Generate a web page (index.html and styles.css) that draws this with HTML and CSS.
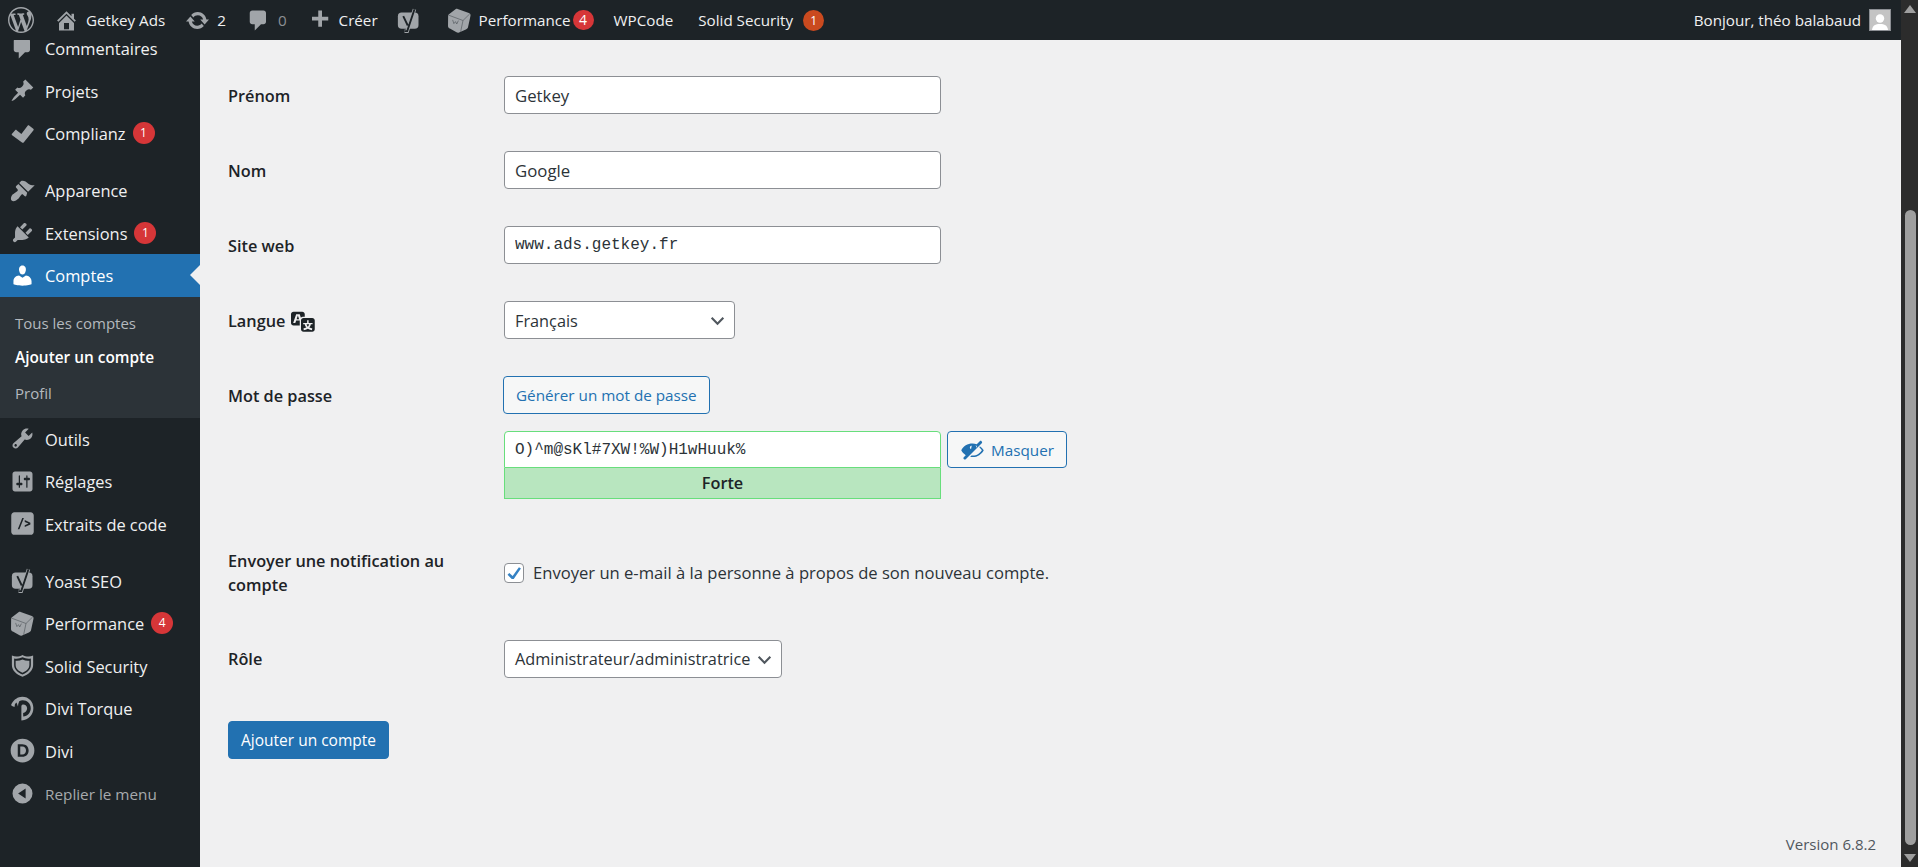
FILE: index.html
```html
<!DOCTYPE html>
<html lang="fr">
<head>
<meta charset="utf-8">
<title>Ajouter un compte</title>
<link rel="stylesheet" href="styles.css">
</head>
<body>
<svg class="defs" width="0" height="0" aria-hidden="true">
  <symbol id="i-wp" viewBox="0 0 20 20"><path d="M20 10c0-5.51-4.49-10-10-10C4.48 0 0 4.49 0 10c0 5.52 4.48 10 10 10 5.51 0 10-4.48 10-10zM7.78 15.37L4.37 6.22c.55-.02 1.17-.08 1.17-.08.5-.06.44-1.13-.06-1.11 0 0-1.45.11-2.37.11-.18 0-.37 0-.58-.01C4.12 2.69 6.87 1.11 10 1.11c2.33 0 4.45.87 6.05 2.34-.68-.11-1.65.39-1.65 1.58 0 .74.45 1.36.9 2.1.35.61.55 1.36.55 2.46 0 1.49-1.4 5-1.4 5l-3.03-8.37c.54-.02.82-.17.82-.17.5-.05.44-1.25-.06-1.22 0 0-1.44.12-2.38.12-.87 0-2.33-.12-2.33-.12-.5-.03-.56 1.2-.06 1.22l.92.08 1.26 3.41zM17.41 10c.24-.64.74-1.87.43-4.25.7 1.29 1.05 2.71 1.05 4.25 0 3.29-1.73 6.24-4.4 7.78.97-2.59 1.94-5.2 2.92-7.78zM6.1 18.09C3.12 16.65 1.11 13.53 1.11 10c0-1.3.23-2.48.72-3.59C3.25 10.3 4.67 14.2 6.1 18.09zm4.03-6.63l2.58 6.98c-.86.29-1.76.45-2.71.45-.79 0-1.57-.11-2.29-.33.81-2.38 1.62-4.74 2.42-7.1z"/></symbol>
  <symbol id="i-home" viewBox="0 0 20 20"><path d="M16 8.5l1.53 1.53-1.06 1.06L10 4.62l-6.47 6.47-1.06-1.06L10 2.5l4 4v-2h2v4zm-6-2.46l6 5.99V18H4v-5.97zM12 17v-5H8v5h4z"/></symbol>
  <symbol id="i-update" viewBox="0 0 20 20"><path d="M10.2 3.28c3.53 0 6.43 2.61 6.92 6h2.08l-3.5 4-3.5-4h2.32c-.45-1.97-2.21-3.45-4.32-3.45-1.45 0-2.73.71-3.54 1.78L4.95 5.66C6.23 4.2 8.11 3.28 10.2 3.28zm-.4 13.44c-3.52 0-6.43-2.61-6.92-6H.8l3.5-4c1.17 1.33 2.33 2.67 3.5 4H5.48c.45 1.97 2.21 3.45 4.32 3.45 1.45 0 2.73-.71 3.54-1.78l1.71 1.95c-1.28 1.46-3.15 2.38-5.25 2.38z"/></symbol>
  <symbol id="i-comment" viewBox="0 0 20 20"><path d="M5 2h9c1.1 0 2 .9 2 2v7c0 1.1-.9 2-2 2h-2l-5 5v-5H5c-1.1 0-2-.9-2-2V4c0-1.1.9-2 2-2z"/></symbol>
  <symbol id="i-plus" viewBox="0 0 20 20"><path d="M17 7v3h-5v5H9v-5H4V7h5V2h3v5h5z"/></symbol>
  <symbol id="i-yoast" viewBox="0 0 20 20"><rect x="1.500" y="3.500" width="16.500" height="13" rx="3"/><path class="y-edge" d="M14.800 1L9 18.500H6.800"/><path class="y-ink" d="M5.800 6.500l3.600 7.500M14.800 1L9 18.500H6.800"/></symbol>
  <symbol id="i-cube" viewBox="0 0 20 20"><path d="M8.500.7l9 3.300c1 .4 1.500 1.100 1.300 2.100l-2 9.300c-.2 1-.8 1.300-1.700 1.700l-5.500 2.500c-.8.300-1.300.200-2-.2l-5.300-3C1.300 16 .8 15.300.8 14.300L.9 6.600c0-.9.400-1.500 1.200-2l4.700-3.600c.5-.4 1.100-.500 1.700-.300z"/><path class="cut-thin" d="M1.500 5.800l11.300 4.200 5.300-5.200M12.800 10l-1.900 9M4.500 9.500l1 3 1.300-1.600 1 1.900 1.300-2.700"/></symbol>
  <symbol id="i-pin" viewBox="0 0 20 20"><path d="M10.440 3.020l1.820-1.820 6.360 6.350-1.830 1.820c-1.050-.680-2.480-.570-3.410.360l-.750.750c-.920.930-1.040 2.350-.350 3.410l-1.830 1.820-2.410-2.410-2.800 2.790c-.420.420-3.380 2.710-3.800 2.290s1.860-3.390 2.280-3.810l2.790-2.790L4.100 9.360l1.830-1.820c1.050.69 2.480.57 3.400-.36l.750-.750c.930-.920 1.050-2.350.360-3.410z"/></symbol>
  <symbol id="i-check" viewBox="0 0 20 20"><path d="M15.300 3.600l3.300 2.500c.4.300.5.8.2 1.200l-7.700 9.600c-.4.500-1 .6-1.500.2L1.700 11.300c-.4-.3-.4-.9-.1-1.200l2.500-2.700c.3-.4.900-.4 1.200-.1l3.800 3.100 5-6.600c.3-.4.800-.5 1.200-.2z"/></symbol>
  <symbol id="i-brush" viewBox="0 0 20 20"><path d="M14.480 11.060L7.410 3.990l1.500-1.500c.5-.56 2.300-.47 3.510.32 1.210.8 1.430 1.280 2.910 2.100 1.180.64 2.450 1.260 4.450.85zm-.71.71L6.700 4.700 4.930 6.470c-.39.39-.39 1.020 0 1.410l1.060 1.060c.39.39.39 1.030 0 1.420-.6.6-1.430 1.110-2.210 1.690-.35.26-.7.53-1.010.84C1.430 13.230 0 16.600 1.300 18c1.400 1.300 4-.100 5.300-1.400.31-.31.58-.66.85-1.010.57-.78 1.080-1.610 1.690-2.210.39-.39 1.020-.39 1.410 0l1.060 1.060c.39.39 1.020.39 1.410 0z"/></symbol>
  <symbol id="i-plug" viewBox="0 0 20 20"><path d="M13.110 4.360L9.870 7.600 8 5.730l3.240-3.240c.35-.34 1.050-.2 1.560.32.52.51.66 1.210.31 1.550zm-8 1.770l.91-1.120 9.010 9.010-1.190.84c-.71.71-2.630 1.160-3.820 1.160H6.140L4.900 17.260c-.59.59-1.540.59-2.120 0-.59-.58-.59-1.530 0-2.120l1.240-1.240v-3.880c0-1.130.4-3.190 1.090-3.890zm7.260 3.970l3.240-3.240c.34-.35 1.040-.21 1.550.31.52.51.66 1.210.31 1.550l-3.240 3.250z"/></symbol>
  <symbol id="i-user" viewBox="0 0 20 20"><path d="M10 9.250c-2.270 0-2.730-3.440-2.730-3.440C7 4.020 7.820 2 9.970 2c2.160 0 2.980 2.020 2.710 3.810 0 0-.41 3.440-2.680 3.440zm0 2.570L12.720 10c2.390 0 4.520 2.330 4.520 4.530v2.490s-3.650 1.130-7.240 1.130c-3.650 0-7.240-1.130-7.240-1.130v-2.490c0-2.250 1.940-4.480 4.470-4.480z"/></symbol>
  <symbol id="i-tool" viewBox="0 0 20 20"><path d="M16.680 9.770c-1.340 1.340-3.300 1.670-4.950.99l-5.410 6.520c-.99.99-2.590.99-3.580 0s-.99-2.590 0-3.570l6.520-5.420c-.68-1.650-.35-3.610.99-4.950 1.280-1.280 3.120-1.620 4.720-1.060l-2.890 2.890 2.820 2.820 2.860-2.870c.53 1.580.18 3.390-1.080 4.650zM3.810 16.210c.4.39 1.040.39 1.430 0 .4-.4.4-1.040 0-1.430-.39-.4-1.030-.4-1.430 0-.39.39-.39 1.030 0 1.430z"/></symbol>
  <symbol id="i-settings" viewBox="0 0 20 20"><path d="M18 16V4c0-1.100-.9-2-2-2H4c-1.100 0-2 .9-2 2v12c0 1.100.9 2 2 2h12c1.100 0 2-.9 2-2zM8 11h1c.55 0 1 .45 1 1s-.45 1-1 1H8v1.500c0 .28-.22.5-.5.5s-.5-.22-.5-.5V13H6c-.55 0-1-.45-1-1s.45-1 1-1h1V5.500c0-.28.22-.5.5-.5s.5.22.5.5V11zm5-2h-1c-.55 0-1-.45-1-1s.45-1 1-1h1V5.500c0-.28.22-.5.5-.5s.5.22.5.5V7h1c.55 0 1 .45 1 1s-.45 1-1 1h-1v5.500c0 .28-.22.5-.5.5s-.5-.22-.5-.5V9z"/></symbol>
  <symbol id="i-code" viewBox="0 0 20 20"><path fill-rule="evenodd" d="M3.500 1h13C17.900 1 19 2.100 19 3.500v13c0 1.400-1.100 2.500-2.500 2.500h-13C2.100 19 1 17.900 1 16.500v-13C1 2.100 2.100 1 3.500 1zM9.800 5.500L6.200 14.500h1.300l3.600-9zM11.800 7.200v1.500l3 1.300-3 1.300v1.500l4.500-2.100v-1.400z"/></symbol>
  <symbol id="i-shield" viewBox="0 0 20 20"><path fill-rule="evenodd" d="M10 1.500c2.600 1.400 5.500 1.900 8.500.4v7.600c0 4.300-3.500 7.500-8.500 9.500-5-2-8.500-5.200-8.500-9.500V1.900c3 1.500 5.900 1 8.500-.4zM10 3.400C7.800 4.400 5.500 4.800 3.300 4.300v5.200c0 3.300 2.700 5.900 6.700 7.600 4-1.700 6.700-4.300 6.700-7.600V4.300c-2.200.5-4.500.1-6.700-.9z"/><path d="M10 5.200c-1.800.8-3.700 1.100-5.500.9v3.500c0 2.700 2.200 4.800 5.500 6.200 3.300-1.400 5.500-3.500 5.500-6.200V6.100C13.700 6.300 11.800 6 10 5.200z"/></symbol>
  <symbol id="i-torque" viewBox="0 0 20 20"><path d="M9.800.5c5.300 0 8.900 3.900 8.900 9 0 5.300-3.800 9.500-9.300 10l-.3-.1V8.200c0-1 .8-1.500 1.500-1.500 1.600 0 3.100 1.300 3.100 3.100 0 2.100-1.600 3.500-3.200 3.800v-.1 0l.1 2.900c3.400-.5 6-3.100 6-6.700 0-3.700-2.900-6.300-6.400-6.300-1 0-2 .2-2.800.7l-.8 2.200-.2 2-1.200-3.100-1.200 1.200-.4 2.400L1.600 8C.8 7.400.8 6.600 1.400 5.900 3.300 2.700 6.200.5 9.800.5z"/></symbol>
  <symbol id="i-divi" viewBox="0 0 20 20"><path fill-rule="evenodd" d="M10 .5a9.500 9.500 0 1 1 0 19 9.500 9.500 0 0 1 0-19zM6.200 5v10h3.600c3.300 0 5.100-2.200 5.100-5S13.100 5 9.800 5zM8.200 6.800h1.600c2 0 3 1.400 3 3.200s-1 3.200-3 3.200H8.200z"/></symbol>
  <symbol id="i-collapse" viewBox="0 0 20 20"><path fill-rule="evenodd" d="M10 2a8 8 0 1 1 0 16 8 8 0 0 1 0-16zM12.500 6L6.500 10l6 4z"/></symbol>
  <symbol id="i-translate" viewBox="0 0 20 20"><path d="M11 7H9.490c-.63 0-1.250.3-1.590.7L7 5H4.130l-2.390 7h1.690l.74-2H7v4H2c-1.100 0-2-.9-2-2V5c0-1.100.9-2 2-2h7c1.100 0 2 .9 2 2v2zM6.510 9H4.490l1-2.930zM10 8h7c1.100 0 2 .9 2 2v7c0 1.100-.9 2-2 2h-7c-1.100 0-2-.9-2-2v-7c0-1.100.9-2 2-2zm7.250 5v-1.080h-3.170V9.750h-1.160v2.170H9.750V13h1.280c.11.85.56 1.850 1.280 2.620-.87.36-1.890.62-2.310.62-.01.02.22.97.2 1.460.84 0 2.210-.5 3.280-1.150 1.090.65 2.480 1.150 3.340 1.150-.02-.49.2-1.440.2-1.460-.43 0-1.490-.27-2.380-.63.7-.77 1.140-1.770 1.250-2.610h1.360zm-3.810 1.930c-.5-.46-.85-1.130-1.010-1.930h2.090c-.17.8-.51 1.470-1 1.930l-.04.03s-.03-.02-.04-.03z"/></symbol>
  <symbol id="i-hidden" viewBox="0 0 20 20"><path d="M17.200 3.300l.2.200c.4.400.4 1 0 1.400L4.600 17.700c-.4.400-1 .4-1.400 0l-.2-.2c-.4-.4-.4-1 0-1.400l1.600-1.600C3 13.500 1.800 12.200 1 10.600c.8-1.700 2-3 3.600-4S8 5.100 10 5.100c1.200 0 2.300.2 3.400.6l2.400-2.400c.4-.4 1-.4 1.400 0zM13.600 7.200c-.4-.3-.8-.5-1.200-.7.5.6.7 1.300.7 2 0 .6-.2 1.100-.4 1.600zM9.400 7c-.8 0-1.500.5-1.500 1.400 0 .6.400 1.100.9 1.300zM15.800 7.400c1.300.8 2.300 1.900 3.200 3.200-.8 1.600-2 2.900-3.600 3.900s-3.300 1.500-5.300 1.500c-.7 0-1.400-.1-2-.2l1.100-1.100c.3 0 .6.100.9.100 1.700 0 3.200-.4 4.500-1.200 1.200-.800 2.200-1.800 2.900-3-.6-.8-1.200-1.500-1.900-2z"/></symbol>
</svg>

<div class="viewport">
  <div class="page">
    <header class="adminbar">
      <a class="ab-item ab-logo"><svg class="ic ic-logo"><use href="#i-wp"/></svg></a>
      <a class="ab-item"><svg class="ic"><use href="#i-home"/></svg><span>Getkey Ads</span></a>
      <a class="ab-item"><svg class="ic"><use href="#i-update"/></svg><span>2</span></a>
      <a class="ab-item"><svg class="ic"><use href="#i-comment"/></svg><span class="muted">0</span></a>
      <a class="ab-item"><svg class="ic"><use href="#i-plus"/></svg><span>Créer</span></a>
      <a class="ab-item ab-yoast"><svg class="ic"><use href="#i-yoast"/></svg></a>
      <a class="ab-item ab-perf"><svg class="ic ic-cube"><use href="#i-cube"/></svg><span>Performance</span><b class="badge badge-bar">4</b></a>
      <a class="ab-item"><span>WPCode</span></a>
      <a class="ab-item ab-solid"><span>Solid Security</span><b class="badge badge-orange">1</b></a>
      <a class="ab-item ab-account"><span>Bonjour, théo balabaud</span>
        <span class="avatar"><svg viewBox="0 0 20 20"><circle cx="10" cy="8.500" r="4.200"/><path d="M2 20c.5-4.500 3.500-6 8-6s7.500 1.500 8 6z"/></svg></span>
      </a>
    </header>
    <div class="body-row">
      <nav class="sidemenu">
        <ul class="menu">
          <li class="mi"><svg class="ic"><use href="#i-comment"/></svg><span>Commentaires</span></li>
          <li class="mi"><svg class="ic"><use href="#i-pin"/></svg><span>Projets</span></li>
          <li class="mi"><svg class="ic"><use href="#i-check"/></svg><span>Complianz</span><b class="badge">1</b></li>
          <li class="sep"></li>
          <li class="mi"><svg class="ic"><use href="#i-brush"/></svg><span>Apparence</span></li>
          <li class="mi"><svg class="ic"><use href="#i-plug"/></svg><span>Extensions</span><b class="badge">1</b></li>
          <li class="mi mi-active"><svg class="ic"><use href="#i-user"/></svg><span>Comptes</span></li>
          <li class="submenu">
            <a class="si">Tous les comptes</a>
            <a class="si si-current">Ajouter un compte</a>
            <a class="si">Profil</a>
          </li>
          <li class="mi"><svg class="ic"><use href="#i-tool"/></svg><span>Outils</span></li>
          <li class="mi"><svg class="ic"><use href="#i-settings"/></svg><span>Réglages</span></li>
          <li class="mi"><svg class="ic"><use href="#i-code"/></svg><span>Extraits de code</span></li>
          <li class="sep"></li>
          <li class="mi"><svg class="ic"><use href="#i-yoast"/></svg><span>Yoast SEO</span></li>
          <li class="mi"><svg class="ic ic-cube"><use href="#i-cube"/></svg><span>Performance</span><b class="badge">4</b></li>
          <li class="mi"><svg class="ic"><use href="#i-shield"/></svg><span>Solid Security</span></li>
          <li class="mi"><svg class="ic"><use href="#i-torque"/></svg><span>Divi Torque</span></li>
          <li class="mi"><svg class="ic"><use href="#i-divi"/></svg><span>Divi</span></li>
          <li class="mi mi-collapse"><svg class="ic"><use href="#i-collapse"/></svg><span>Replier le menu</span></li>
        </ul>
      </nav>
      <main class="content">
        <form class="form">
          <div class="row">
            <label class="lbl">Prénom</label>
            <input class="field" type="text" value="Getkey">
          </div>
          <div class="row">
            <label class="lbl">Nom</label>
            <input class="field" type="text" value="Google">
          </div>
          <div class="row">
            <label class="lbl">Site web</label>
            <input class="field mono" type="text" value="www.ads.getkey.fr">
          </div>
          <div class="row">
            <label class="lbl lbl-lang">Langue <svg class="ic-lang"><use href="#i-translate"/></svg></label>
            <div class="select sel-lang"><span>Français</span><svg class="chev" viewBox="0 0 16 16"><path d="M2.500 5.500L8 11l5.500-5.500"/></svg></div>
          </div>
          <div class="row row-pass">
            <label class="lbl lbl-pass">Mot de passe</label>
            <div class="pass">
              <button type="button" class="btn">Générer un mot de passe</button>
              <div class="pass-line">
                <div class="pass-box">
                  <input class="field mono field-strong" type="text" value="O)^m@sKl#7XW!%W)H1wHuuk%">
                  <div class="strength">Forte</div>
                </div>
                <button type="button" class="btn btn-hide"><svg class="ic-hide"><use href="#i-hidden"/></svg>Masquer</button>
              </div>
            </div>
          </div>
          <div class="row row-notif">
            <label class="lbl lbl-wrap">Envoyer une notification au compte</label>
            <label class="check-line"><span class="checkbox"><svg viewBox="0 0 20 20"><path d="M15.500 3.500l2.200 1.600-8 11.500H7.500L2.800 12l2-2 3.700 3.400z"/></svg></span>Envoyer un e-mail à la personne à propos de son nouveau compte.</label>
          </div>
          <div class="row">
            <label class="lbl">Rôle</label>
            <div class="select sel-role"><span>Administrateur/administratrice</span><svg class="chev" viewBox="0 0 16 16"><path d="M2.500 5.500L8 11l5.500-5.500"/></svg></div>
          </div>
          <button type="button" class="btn-primary">Ajouter un compte</button>
        </form>
        <footer class="foot">Version 6.8.2</footer>
      </main>
    </div>
  </div>
  <div class="scrollbar">
    <span class="sb-up"></span>
    <span class="sb-track"><span class="sb-thumb"></span></span>
    <span class="sb-down"></span>
  </div>
</div>
</body>
</html>
```
FILE: styles.css
```css
* { box-sizing: border-box; }
html, body { margin: 0; height: 100%; overflow: hidden; }
body {
  font-family: "Open Sans", "Noto Sans", sans-serif;
  font-size: 16.300px;
  color: #1d2327;
  background: #f0f0f1;
}
.defs { position: absolute; }
ul { list-style: none; margin: 0; padding: 0; }
.viewport { display: flex; height: 867px; }
.page { flex: 1; min-width: 0; display: flex; flex-direction: column; }

/* admin bar */
.adminbar {
  height: 40px; flex: none;
  background: #1d2327; color: #f0f0f1;
  display: flex; align-items: center;
  font-size: 15.200px;
}
.ab-item { display: flex; align-items: center; height: 40px; padding: 0 10px; gap: 7px; white-space: nowrap; }
.ab-logo { padding: 0 10px 0 8px; }
.ic { width: 25px; height: 25px; fill: #a1a5a9; flex: none; }
.ic-logo { width: 26px; height: 26px; }
.y-edge { fill: none; stroke: #a1a5a9; stroke-width: 2.800; }
.y-ink { fill: none; stroke: #1d2327; stroke-width: 1.500; }
.cut-thin { fill: none; stroke: #4f555a; stroke-width: .5; }
.ab-yoast { margin-left: -2px; }
.ab-perf { margin-left: 6px; }
.ab-solid { margin-left: 5px; }
.ab-solid .badge { margin-left: 3px; }
.ab-account { margin-left: auto; gap: 8px; }
.muted { color: #8c8f94; }
.avatar { width: 22px; height: 22px; border: 1px solid #8c8f94; background: #c4c4c4; display: block; overflow: hidden; }
.avatar svg { width: 100%; height: 100%; display: block; fill: #fff; }

/* badges */
.badge {
  width: 22px; height: 22px; border-radius: 50%;
  background: #d63638; color: #fff;
  font-size: 12px; font-weight: 400; line-height: 22px; text-align: center;
  flex: none;
}
.badge-bar { width: 21px; height: 20px; border-radius: 10px; line-height: 20px; font-size: 14px; margin-left: -5px; }
.badge-orange { background: #ca4a1f; width: 21px; height: 21px; line-height: 21px; }

/* layout */
.body-row { flex: 1; min-height: 0; display: flex; }
.sidemenu { width: 200px; flex: none; background: #1d2327; color: #f0f0f1; overflow: hidden; }
.menu { margin-top: -13px; }
.mi { position: relative; height: 42.500px; display: flex; align-items: center; padding-left: 10px; gap: 10px; font-size: 16.400px; line-height: 1; white-space: nowrap; }
.mi span { padding-top: 2px; }
.sep { height: 14.500px; }
.mi-active { background: #2271b1; color: #fff; }
.mi-active .ic { fill: #fff; }
.mi-active::after {
  content: ""; position: absolute; right: 0; top: 50%; margin-top: -10px;
  border: 10px solid transparent; border-left-width: 0; border-right-color: #f0f0f1;
}
.mi .badge { margin-left: -3px; }
.mi-collapse { color: #a7aaad; font-size: 15.300px; }
.submenu { background: #2c3338; padding: 8px 0; }
.si { display: flex; align-items: center; height: 35px; padding: 1px 0 0 15px; font-size: 15px; color: #b4b9be; }
.si-current { color: #fff; font-weight: 600; font-size: 15.400px; }

/* content */
.content { flex: 1; min-width: 0; display: flex; flex-direction: column; padding: 17.500px 25px 13px 28px; }
.form { display: flex; flex-direction: column; align-items: flex-start; }
.row { display: grid; grid-template-columns: 276px auto; align-items: center; padding: 18.750px 0; }
.row-pass { align-items: start; padding-bottom: 28px; }
.row-notif { padding: 21px 0 24px; }
.lbl { font-weight: 600; padding-top: 1px; }
.lbl-wrap { max-width: 240px; line-height: 24px; }
.lbl-lang { display: flex; align-items: center; gap: 6px; }
.ic-lang { width: 25px; height: 25px; fill: #1d2327; }
.lbl-pass { line-height: 39px; }
.field {
  width: 437px; height: 37.500px;
  padding: 0 10px; margin: 0;
  font: inherit; font-size: 16.800px; color: #2c3338;
  background: #fff; border: 1px solid #8c8f94; border-radius: 4px;
  outline: none;
}
.field.mono { font-family: "Liberation Mono", monospace; font-size: 16px; }
.select {
  height: 37.500px; padding: 1px 8px 0 10px;
  display: flex; align-items: center; justify-content: space-between;
  background: #fff; border: 1px solid #8c8f94; border-radius: 4px; color: #2c3338;
}
.sel-lang { width: 231px; }
.sel-role { width: 278px; }
.chev { width: 17px; height: 17px; fill: none; stroke: #50575e; stroke-width: 2; flex: none; }
.btn {
  height: 37.500px; padding: 0 12px; margin-left: -1px;
  font: inherit; font-size: 15.250px; color: #2271b1;
  background: #f6f7f7; border: 1px solid #2271b1; border-radius: 4px;
  display: inline-flex; align-items: center;
}
.pass { display: flex; flex-direction: column; align-items: flex-start; gap: 17px; }
.pass-line { display: flex; gap: 6px; align-items: flex-start; }
.pass-box { display: flex; flex-direction: column; }
.field-strong { border-color: #68de7c; border-radius: 4px 4px 0 0; }
.strength {
  height: 31px; line-height: 30px; text-align: center; font-weight: 600;
  background: #b8e6bf; border: 1px solid #68de7c; border-top: 0;
}
.btn-hide { margin-left: 0; gap: 6px; }
.ic-hide { width: 25px; height: 25px; fill: #2271b1; }
.check-line { display: flex; align-items: center; gap: 9px; color: #2c3338; font-size: 16.600px; }
.checkbox {
  width: 20px; height: 20px; background: #fff; border: 1px solid #8c8f94; border-radius: 4px; display: block; flex: none;
}
.checkbox svg { display: block; width: 100%; height: 100%; fill: #3582c4; }
.btn-primary {
  margin-top: 25px; height: 37.500px; width: 161px; padding: 0;
  font: inherit; font-size: 15.500px; color: #fff;
  background: #2271b1; border: 1px solid #2271b1; border-radius: 4px;
}
.foot { margin-top: auto; align-self: flex-end; font-size: 15px; color: #50575e; }

/* scrollbar */
.scrollbar { width: 17px; flex: none; background: #2c2c2c; display: flex; flex-direction: column; }
.sb-up, .sb-down { display: block; width: 0; height: 0; flex: none; margin-left: 3px; border-left: 6.500px solid transparent; border-right: 6.500px solid transparent; }
.sb-up { margin-top: 5px; border-bottom: 8px solid #9f9f9f; }
.sb-down { margin-top: 9px; margin-bottom: 5px; border-top: 8px solid #9f9f9f; }
.sb-track { flex: 1; width: 100%; padding: 197px 2px 0 4px; display: flex; }
.sb-thumb { flex: 1; background: #9f9f9f; border-radius: 6px; }
```
